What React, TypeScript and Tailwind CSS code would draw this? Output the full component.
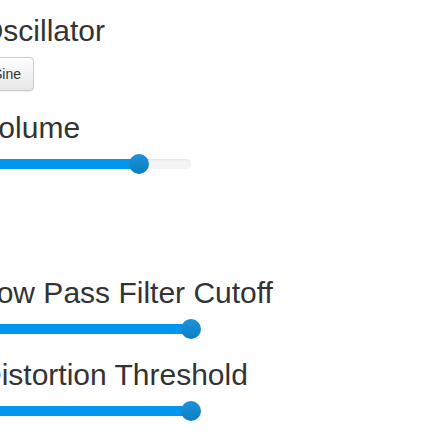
import React from "react";

interface SliderProps {
    value: number;
}

function Slider({ value }: SliderProps) {
    return (
        <div className="w-[211px] h-5 flex items-center">
            {/* track with fill, thumb sits on top */}
            <div className="flex-1 h-[10px] rounded-[5px] bg-[#f5f5f5] shadow-[inset_0_1px_2px_rgba(0,0,0,0.08)] flex items-center">
                <div className="h-[10px] rounded-l-[5px] bg-[#0095ef] shrink-0" style={{ width: `${value}%` }} />
                <div className="w-5 h-5 -ml-[10px] shrink-0 rounded-full bg-gradient-to-b from-[#1b92d8] to-[#0c7fc4]" />
            </div>
        </div>
    );
}

function Section({ title, children, className }: { title: string; children: React.ReactNode; className?: string }) {
    return (
        <section className={`flex flex-col items-start gap-[10px] ${className ?? ""}`}>
            <h2 className="text-[30px] leading-[33px] font-normal">{title}</h2>
            {children}
        </section>
    );
}

export default function App() {
    return (
        <div className="w-[440px] h-[440px] bg-white overflow-hidden font-['Liberation_Sans',Arial,sans-serif] text-[#333]">
            <div className="-ml-[20px] pt-[14px] flex flex-col">
                <Section title="Oscillator">
                    <button className="h-[34px] px-3 text-[14px] text-[#333] border border-[#ccc] rounded bg-gradient-to-b from-white to-[#e6e6e6] shadow-[0_1px_1px_rgba(0,0,0,0.06)]">
                        Sine
                    </button>
                </Section>

                <Section title="Volume" className="mt-[20px]">
                    <Slider value={75.3} />
                </Section>

                <Section title="Low Pass Filter Cutoff" className="mt-[102px]">
                    <Slider value={100} />
                </Section>

                <Section title="Distortion Threshold" className="mt-[19px]">
                    <Slider value={100} />
                </Section>
            </div>
        </div>
    );
}
